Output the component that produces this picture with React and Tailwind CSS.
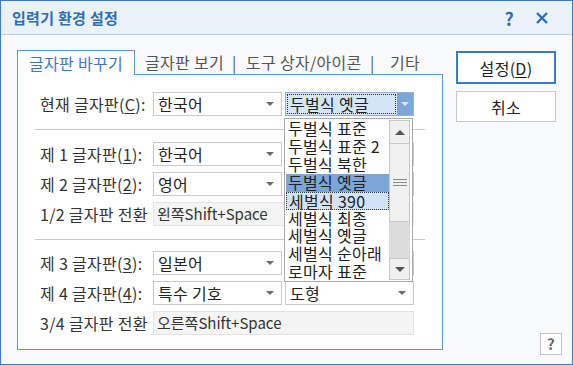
function Arrow({ className = "border-t-[#6b6b6b]" }) {
  return (
    <span
      className={`inline-block h-0 w-0 border-x-[4px] border-t-[4px] border-x-transparent ${className}`}
    />
  )
}

function Combo({ value, className = "" }) {
  return (
    <div
      className={`flex h-[24px] w-[129px] items-center justify-between border border-[#cacaca] bg-white pl-[4px] pr-[7px] text-[#222] ${className}`}
    >
      <span className="whitespace-nowrap">{value}</span>
      <Arrow />
    </div>
  )
}

function Field({ value }) {
  return (
    <div className="flex h-[24px] w-[261px] items-center whitespace-nowrap border border-[#e3e3e3] bg-[#f4f4f4] pl-[3px] text-[15px] tracking-normal text-[#333]">
      {value}
    </div>
  )
}

function Row({ label, children }) {
  return (
    <div className="flex items-center">
      <div className="w-[113px] shrink-0 whitespace-nowrap text-[#333]">{label}</div>
      <div className="flex gap-[3px]">{children}</div>
    </div>
  )
}

const layouts = [
  "두벌식 표준",
  "두벌식 표준 2",
  "두벌식 북한",
  "두벌식 옛글",
  "세벌식 390",
  "세벌식 최종",
  "세벌식 옛글",
  "세벌식 순아래",
  "로마자 표준",
]

function DropList() {
  return (
    <div className="absolute left-[283px] top-[117px] flex h-[164px] w-[129px] border border-[#a9a9a9] bg-white text-[#222]">
      <div className="flex w-[104px] flex-col pl-[1px] pt-[1px]">
        {layouts.map((item, i) => (
          <div
            key={item}
            className={`h-[18px] whitespace-nowrap pl-[2px] leading-[17px] ${
              i === 3
                ? "bg-[#7aa6d8]"
                : i === 4
                ? "border border-dotted border-[#333] bg-[#d2e3f5] pl-[1px] leading-[15px]"
                : ""
            }`}
          >
            {item}
          </div>
        ))}
      </div>
      <div className="flex w-[21px] flex-col py-[1px]">
        <div className="flex h-[24px] items-center justify-center border border-[#c6c6c6] bg-[#f0f0f0]">
          <span className="inline-block h-0 w-0 border-x-[5px] border-b-[5px] border-x-transparent border-b-[#555]" />
        </div>
        <div className="flex h-[78px] flex-col items-center justify-center gap-[2px] border border-t-0 border-[#c6c6c6] bg-[#f0f0f0]">
          <span className="h-[1px] w-[14px] bg-[#8a8a8a]" />
          <span className="h-[1px] w-[14px] bg-[#8a8a8a]" />
          <span className="h-[1px] w-[14px] bg-[#8a8a8a]" />
        </div>
        <div className="flex-1 bg-[#dcdcdc]" />
        <div className="flex h-[22px] items-center justify-center border border-[#c6c6c6] bg-[#f0f0f0]">
          <span className="inline-block h-0 w-0 border-x-[5px] border-t-[5px] border-x-transparent border-t-[#555]" />
        </div>
      </div>
    </div>
  )
}

export default function App() {
  return (
    <div className="relative flex h-[365px] w-[573px] flex-col overflow-hidden border border-[#3b7cc6] bg-[#f8f9fb] font-['Noto_Sans_CJK_KR',sans-serif] text-[16px] leading-[18px] tracking-[0.3px]">
      {/* title bar */}
      <div className="flex h-[34px] shrink-0 items-center border-b border-[#b7d0ea] bg-[#e9f1f9] pl-[11px] pr-[24px]">
        <span className="text-[15px] font-bold text-[#2f6db4]">입력기 환경 설정</span>
        <div className="ml-auto flex items-center gap-[22px] text-[#2f6db4]">
          <span className="text-[18px] font-bold">?</span>
          <svg width="12" height="12" viewBox="0 0 12 12">
            <path d="M1 1L11 11M11 1L1 11" stroke="#2f6db4" strokeWidth="2.4" />
          </svg>
        </div>
      </div>

      {/* body */}
      <div className="flex flex-1 pl-[16px] pt-[15px]">
        <div className="flex w-[426px] flex-col">
          <div className="flex h-[24px] items-end">
            <div className="relative z-10 -mb-[1px] flex h-[25px] w-[118px] items-center justify-center border border-b-0 border-[#5e97d3] bg-white text-[#3b78c2]">
              글자판 바꾸기
            </div>
            <div className="flex h-[24px] items-center whitespace-nowrap pl-[10px] text-[#555]">
              <span className="w-[87px]">글자판 보기</span>
              <span className="w-[14px]">|</span>
              <span className="w-[124px]">도구 상자/아이콘</span>
              <span className="w-[20px]">|</span>
              <span>기타</span>
            </div>
          </div>
          <div className="flex h-[276px] flex-col border border-[#5e97d3] bg-white pl-[22px] pt-[17px]">
            <Row
              label={
                <>
                  현재 글자판(<u className="underline-offset-2">C</u>):
                </>
              }
            >
              <Combo value="한국어" />
              <div className="flex h-[24px] w-[129px] border border-[#8fb3de] bg-[#d5e5f5]">
                <div className="m-[1px] flex flex-1 items-center whitespace-nowrap border border-dotted border-[#333] pl-[2px] text-[#222]">
                  두벌식 옛글
                </div>
                <div className="flex w-[16px] items-center justify-center bg-[#7ba7d8]">
                  <Arrow className="border-t-[#dfe8f2]" />
                </div>
              </div>
            </Row>

            <div className="ml-[-5px] mt-[13px] h-[1px] w-[390px] bg-[#c9c9c9]" />

            <div className="mt-[12px] flex flex-col gap-[6px]">
              <Row
                label={
                  <>
                    제 1 글자판(<u className="underline-offset-2">1</u>):
                  </>
                }
              >
                <Combo value="한국어" />
                <Combo value="" />
              </Row>
              <Row
                label={
                  <>
                    제 2 글자판(<u className="underline-offset-2">2</u>):
                  </>
                }
              >
                <Combo value="영어" />
                <Combo value="" />
              </Row>
              <Row label="1/2 글자판 전환">
                <Field value="왼쪽Shift+Space" />
              </Row>
            </div>

            <div className="ml-[-5px] mt-[13px] h-[1px] w-[390px] bg-[#c9c9c9]" />

            <div className="mt-[11px] flex flex-col gap-[6px]">
              <Row
                label={
                  <>
                    제 3 글자판(<u className="underline-offset-2">3</u>):
                  </>
                }
              >
                <Combo value="일본어" />
                <Combo value="" />
              </Row>
              <Row
                label={
                  <>
                    제 4 글자판(<u className="underline-offset-2">4</u>):
                  </>
                }
              >
                <Combo value="특수 기호" />
                <Combo value="도형" />
              </Row>
              <Row label="3/4 글자판 전환">
                <Field value="오른쪽Shift+Space" />
              </Row>
            </div>
          </div>
        </div>

        {/* buttons */}
        <div className="ml-[13px] flex flex-col pt-[1px]">
          <button className="flex h-[33px] w-[100px] items-center justify-center border-2 border-[#3a7bc6] bg-white text-[#222]">
            설정(<u className="underline-offset-2">D</u>)
          </button>
          <button className="mt-[7px] flex h-[31px] w-[100px] items-center justify-center border border-[#c8c8c8] bg-white text-[#222]">
            취소
          </button>
          <button className="ml-[84px] mt-auto mb-[9px] flex h-[22px] w-[22px] items-center justify-center border border-[#c4c4c4] bg-white text-[15px] font-bold text-[#666]">
            ?
          </button>
        </div>
      </div>

      <DropList />
    </div>
  )
}
